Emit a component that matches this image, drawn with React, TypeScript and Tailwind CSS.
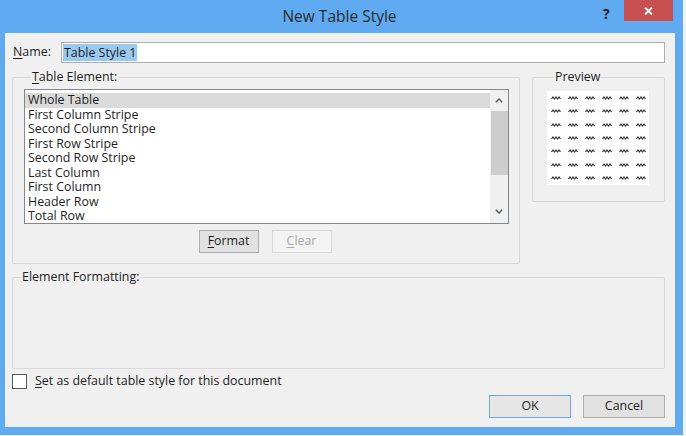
const ITEMS = [
  'Whole Table',
  'First Column Stripe',
  'Second Column Stripe',
  'First Row Stripe',
  'Second Row Stripe',
  'Last Column',
  'First Column',
  'Header Row',
  'Total Row',
];

const font = { fontFamily: '"Open Sans", "Noto Sans", sans-serif' };

function Glyph() {
  return (
    <svg width="10" height="4" viewBox="0 0 10 4">
      <polyline points="0.5,3 2,1 3.5,3 5,1 6.5,3 8,1 9.5,3" fill="none" stroke="#333" strokeWidth="1.2" />
    </svg>
  );
}

function Btn({ children, disabled, primary }: { children: React.ReactNode; disabled?: boolean; primary?: boolean }) {
  return (
    <button
      className={
        primary
          ? 'h-[23px] w-[82px] border border-[#6ea9e6] bg-[#e6e6e6] text-[#1e1e1e]'
          : disabled
          ? 'h-[23px] w-[60px] border border-[#dadada] bg-[#f3f3f3] text-[#a8a8a8]'
          : 'h-[23px] border border-[#adadad] bg-[#e1e1e1] text-[#1e1e1e]'
      }
    >
      {children}
    </button>
  );
}

export default function App() {
  return (
    <div className="w-[686px] h-[436px] bg-[#eef3f8] text-[12.4px] text-[#1e1e1e]" style={font}>
      <div className="w-[683px] h-[435px] bg-[#5faaf0] flex flex-col">
        {/* Title bar */}
        <div className="relative h-[33px] flex items-center justify-center">
          <span className="text-[15.5px] text-[#2b2b2b] pt-[1px] pr-[4px]">New Table Style</span>
          <span className="absolute left-[603px] top-[3px] text-[14px] font-bold text-[#222]">?</span>
          <div className="absolute right-[10px] top-0 w-[49px] h-[21px] bg-[#c75050] flex items-center justify-center">
            <svg width="9" height="8" viewBox="0 0 9 8">
              <path d="M1 0.5 L8 7.5 M8 0.5 L1 7.5" stroke="#fff" strokeWidth="1.8" />
            </svg>
          </div>
        </div>

        {/* Client area */}
        <div className="flex-1 ml-[5px] mr-[8px] mb-[8px] bg-[#f0f0f0] pl-[7px] pr-[10px] pt-[9px] flex flex-col">
          {/* Name row */}
          <div className="flex items-center h-[21px]">
            <span className="w-[49px] pl-[1px]">
              <u className="underline-offset-2">N</u>ame:
            </span>
            <div className="flex-1 h-[21px] bg-white border border-[#abadb3] flex items-center pl-[1px]">
              <span className="bg-[#99c9ef] px-[1px] leading-[17px]">Table Style 1</span>
            </div>
          </div>

          {/* Table element + preview */}
          <div className="flex mt-[6px] h-[198px]">
            <fieldset className="w-[508px] h-[195px] border border-[#d8d8d8] rounded-[2px] pl-[11px] pr-[10px]">
              <legend className="ml-[7px] px-[1px] leading-[16px]">
                <u className="underline-offset-2">T</u>able Element:
              </legend>
              <div className="mt-[4px] h-[135px] border border-[#828790] bg-white flex">
                <div className="flex-1 pt-[3px]">
                  {ITEMS.map((it, i) => (
                    <div
                      key={it}
                      className={
                        i === 0
                          ? 'h-[14.5px] leading-[14.5px] pl-[3px] bg-[#dadada]'
                          : 'h-[14.5px] leading-[14.5px] pl-[3px]'
                      }
                    >
                      {it}
                    </div>
                  ))}
                </div>
                <div className="w-[18px] bg-[#f0f0f0] flex flex-col items-center">
                  <div className="h-[21px] flex items-center justify-center">
                    <svg width="8" height="5" viewBox="0 0 8 5">
                      <polyline points="0.8,4.2 4,1 7.2,4.2" fill="none" stroke="#606060" strokeWidth="1.5" />
                    </svg>
                  </div>
                  <div className="w-[17px] h-[64px] bg-[#cdcdcd]" />
                  <div className="flex-1" />
                  <div className="h-[20px] flex items-center justify-center pb-[3px]">
                    <svg width="8" height="5" viewBox="0 0 8 5">
                      <polyline points="0.8,0.8 4,4 7.2,0.8" fill="none" stroke="#606060" strokeWidth="1.5" />
                    </svg>
                  </div>
                </div>
              </div>
              <div className="flex justify-center gap-[13px] mt-[6px] pr-[3px]">
                <Btn>
                  <span className="inline-block w-[58px]">
                    <u className="underline-offset-2">F</u>ormat
                  </span>
                </Btn>
                <Btn disabled>
                  <u className="underline-offset-2">C</u>lear
                </Btn>
              </div>
            </fieldset>

            <fieldset className="ml-[12px] w-[133px] h-[133px] border border-[#d8d8d8] rounded-[2px] pl-[14px]">
              <legend className="ml-[7px] px-[1px] leading-[16px]">Preview</legend>
              <div className="mt-[6px] w-[102px] h-[94px] bg-white grid grid-cols-6 grid-rows-7 items-center justify-items-center">
                {Array.from({ length: 42 }).map((_, i) => (
                  <Glyph key={i} />
                ))}
              </div>
            </fieldset>
          </div>

          {/* Element formatting */}
          <fieldset className="mt-[2px] h-[100px] border border-[#d8d8d8] rounded-[2px]">
            <legend className="ml-[8px] px-[1px] leading-[16px]">Element Formatting:</legend>
          </fieldset>

          {/* Checkbox row */}
          <div className="flex items-center mt-[4px] h-[16px]">
            <div className="w-[15px] h-[15px] border border-[#5a5a5a] bg-white" />
            <span className="ml-[8px]">
              <u className="underline-offset-2">S</u>et as default table style for this document
            </span>
          </div>

          {/* Dialog buttons */}
          <div className="flex justify-end gap-[12px] mt-[6px]">
            <Btn primary>OK</Btn>
            <Btn>
              <span className="inline-block w-[80px]">Cancel</span>
            </Btn>
          </div>
        </div>
      </div>
    </div>
  );
}
